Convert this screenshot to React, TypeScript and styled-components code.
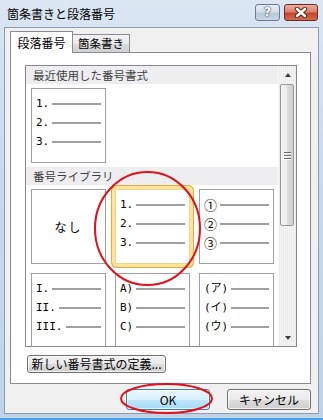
import styled, { createGlobalStyle } from 'styled-components';

const GlobalStyle = createGlobalStyle`
  html, body {
    margin: 0;
    padding: 0;
  }
  body {
    font-family: "Noto Sans CJK JP", sans-serif;
    background: #c9d9ec;
  }
`;

const recent = ['1.', '2.', '3.'];

const library = [
  { kind: 'none' },
  { kind: 'list', items: ['1.', '2.', '3.'], selected: true },
  { kind: 'list', items: ['①', '②', '③'], big: true },
  { kind: 'list', items: ['I.', 'II.', 'III.'] },
  { kind: 'list', items: ['A)', 'B)', 'C)'] },
  { kind: 'list', items: ['(ア)', '(イ)', '(ウ)'] },
];

const NumberCell = ({
  items,
  selected,
  big,
}: {
  items: string[];
  selected?: boolean;
  big?: boolean;
}) => (
  <Cell $selected={selected}>
    {items.map((item) => (
      <Entry key={item}>
        <Num $big={big}>{item}</Num>
        <Rule />
      </Entry>
    ))}
  </Cell>
);

const App = () => {
  return (
    <>
      <GlobalStyle />
      <Window>
        <TitleBar>
          <TitleText>箇条書きと段落番号</TitleText>
          <Captions>
            <HelpButton>?</HelpButton>
            <CloseButton>
              <svg width="14" height="11" viewBox="0 0 14 11">
                <path d="M3 2 L11 9 M11 2 L3 9" stroke="#5a2218" strokeWidth="4.4" strokeLinecap="round" />
                <path d="M3 2 L11 9 M11 2 L3 9" stroke="#ffffff" strokeWidth="2.6" strokeLinecap="round" />
              </svg>
            </CloseButton>
          </Captions>
        </TitleBar>
        <Client>
          <TabStrip>
            <TabActive>段落番号</TabActive>
            <TabInactive>箇条書き</TabInactive>
          </TabStrip>
          <Panel>
            <ListBox>
              <ListContent>
                <GroupHeader>最近使用した番号書式</GroupHeader>
                <CellGrid>
                  <NumberCell items={recent} />
                </CellGrid>
                <GroupHeader>番号ライブラリ</GroupHeader>
                <CellGrid>
                  {library.map((entry, idx) =>
                    entry.kind === 'none' ? (
                      <NoneCell key={idx}>なし</NoneCell>
                    ) : (
                      <NumberCell
                        key={idx}
                        items={entry.items as string[]}
                        selected={entry.selected}
                        big={entry.big}
                      />
                    ),
                  )}
                </CellGrid>
              </ListContent>
              <ScrollBar>
                <ArrowBox>
                  <ArrowUp />
                </ArrowBox>
                <Thumb>
                  <Grip />
                  <Grip />
                  <Grip />
                </Thumb>
                <Track />
                <ArrowBox>
                  <ArrowDown />
                </ArrowBox>
              </ScrollBar>
            </ListBox>
            <DefineButton>新しい番号書式の定義...</DefineButton>
          </Panel>
          <ButtonRow>
            <DialogButton $primary>OK</DialogButton>
            <DialogButton>キャンセル</DialogButton>
          </ButtonRow>
        </Client>
        <Marks width="323" height="420" viewBox="0 0 323 420">
          <ellipse cx="147.5" cy="228.5" rx="52.5" ry="56.5" fill="none" stroke="#e3101a" strokeWidth="2" />
          <ellipse cx="166.5" cy="398.5" rx="45.5" ry="14.5" fill="none" stroke="#e3101a" strokeWidth="2" />
        </Marks>
      </Window>
    </>
  );
};

export default App;

const Window = styled.div`
  position: relative;
  box-sizing: border-box;
  width: 323px;
  height: 420px;
  display: flex;
  flex-direction: column;
  padding: 0 4px 4px 4px;
  background: linear-gradient(180deg, #dbe6f3 0%, #cad9ec 40%, #bfd2e8 100%);
  border-bottom: 2px solid #4aa3ea;
`;

const TitleBar = styled.div`
  height: 27px;
  display: flex;
  align-items: flex-start;
  padding-left: 3px;
`;

const TitleText = styled.div`
  margin-top: 6px;
  font-size: 12px;
  line-height: 16px;
  color: #000;
`;

const Captions = styled.div`
  margin-left: auto;
  margin-top: 4px;
  margin-right: 1px;
  display: flex;
  gap: 4px;
`;

const HelpButton = styled.div`
  box-sizing: border-box;
  width: 25px;
  height: 17px;
  border: 1px solid #6b7c92;
  border-radius: 3px;
  background: linear-gradient(180deg, #e6edf5 0%, #d2dde9 48%, #b7c7d9 52%, #c8d6e5 100%);
  color: #fff;
  font-family: "DejaVu Sans", sans-serif;
  font-weight: bold;
  font-size: 12px;
  line-height: 15px;
  text-align: center;
  text-shadow: 0 0 2px #2b3b50, 0 0 1px #2b3b50;
`;

const CloseButton = styled.div`
  box-sizing: border-box;
  width: 34px;
  height: 17px;
  border: 1px solid #6e2a1d;
  border-radius: 3px;
  background: linear-gradient(180deg, #e8ad9e 0%, #d9806b 48%, #c3442c 52%, #d46a4c 100%);
  display: flex;
  align-items: center;
  justify-content: center;
`;

const Client = styled.div`
  flex: 1;
  display: flex;
  flex-direction: column;
  background: #f0f0f0;
  border: 1px solid #8b9cb3;
  padding: 3px 7px 0 5px;
`;

const TabStrip = styled.div`
  position: relative;
  z-index: 1;
  display: flex;
  align-items: flex-end;
  height: 22px;
  margin-bottom: -1px;
`;

const TabActive = styled.div`
  box-sizing: border-box;
  width: 63px;
  height: 22px;
  border: 1px solid #898c95;
  border-bottom: none;
  background: #fff;
  font-size: 12px;
  line-height: 21px;
  text-align: center;
  color: #000;
`;

const TabInactive = styled.div`
  box-sizing: border-box;
  width: 58px;
  height: 18px;
  margin-left: -1px;
  margin-bottom: 1px;
  border: 1px solid #898c95;
  border-bottom: none;
  background: linear-gradient(180deg, #f3f3f3 0%, #ebebeb 50%, #dddddd 51%, #cfcfcf 100%);
  font-size: 11.5px;
  line-height: 17px;
  text-align: center;
  color: #000;
`;

const Panel = styled.div`
  box-sizing: border-box;
  height: 332px;
  background: #fff;
  border: 1px solid #898c95;
  padding: 12px 13px 0 14px;
`;

const ListBox = styled.div`
  box-sizing: border-box;
  height: 282px;
  display: flex;
  border: 1px solid #828790;
  background: #fff;
`;

const ListContent = styled.div`
  flex: 1;
  display: flex;
  flex-direction: column;
  overflow: hidden;
`;

const GroupHeader = styled.div`
  flex: none;
  height: 18px;
  padding-left: 7px;
  background: #eeeef1;
  color: #3e3e3e;
  font-size: 11.5px;
  line-height: 18px;
`;

const CellGrid = styled.div`
  flex: none;
  display: grid;
  grid-template-columns: repeat(3, 75px);
  grid-auto-rows: 75px;
  gap: 9px;
  padding: 4px 0 4px 5px;
`;

const Cell = styled.div<{ $selected?: boolean }>`
  box-sizing: border-box;
  padding: 5px 4px 0 4px;
  background: #fff;
  border: 1px solid ${(p) => (p.$selected ? '#f4d485' : '#a0a0a0')};
  border-radius: ${(p) => (p.$selected ? '2px' : '0')};
  box-shadow: ${(p) => (p.$selected ? '0 0 0 3px #fde49c, 0 0 0 4px #e2ad45' : 'none')};
`;

const NoneCell = styled.div`
  box-sizing: border-box;
  border: 1px solid #a0a0a0;
  display: flex;
  align-items: center;
  justify-content: center;
  font-size: 12px;
  letter-spacing: 2px;
  color: #000;
`;

const Entry = styled.div`
  display: flex;
  align-items: center;
  height: 19px;
`;

const Num = styled.span<{ $big?: boolean }>`
  font-family: ${(p) =>
    p.$big ? '"Noto Sans CJK JP", sans-serif' : '"DejaVu Sans Mono", "Noto Sans CJK JP", monospace'};
  font-size: ${(p) => (p.$big ? '13px' : '11px')};
  line-height: 19px;
  color: #000;
  white-space: nowrap;
`;

const Rule = styled.div`
  flex: 1;
  height: 2px;
  margin-left: 3px;
  background: #a0a0a0;
`;

const ScrollBar = styled.div`
  flex: none;
  width: 17px;
  display: flex;
  flex-direction: column;
  background: repeating-linear-gradient(90deg, #ebebeb 0px, #ebebeb 1px, #f4f4f4 1px, #f4f4f4 2px);
  border-left: 1px solid #f7f7f7;
`;

const ArrowBox = styled.div`
  flex: none;
  height: 17px;
  display: flex;
  align-items: center;
  justify-content: center;
`;

const ArrowUp = styled.div`
  width: 0;
  height: 0;
  border-left: 3.5px solid transparent;
  border-right: 3.5px solid transparent;
  border-bottom: 4px solid #3d3d3d;
`;

const ArrowDown = styled.div`
  width: 0;
  height: 0;
  border-left: 3.5px solid transparent;
  border-right: 3.5px solid transparent;
  border-top: 4px solid #3d3d3d;
`;

const Thumb = styled.div`
  flex: none;
  box-sizing: border-box;
  height: 142px;
  width: 14px;
  margin: 1px 0 0 1px;
  border: 1px solid #979797;
  border-radius: 2px;
  background: linear-gradient(90deg, #f4f4f4 0%, #ececec 45%, #dcdcdc 55%, #cfcfcf 100%);
  display: flex;
  flex-direction: column;
  align-items: center;
  justify-content: center;
  gap: 2px;
`;

const Grip = styled.div`
  width: 7px;
  height: 1px;
  background: #6b6b6b;
  box-shadow: 0 1px 0 #fafafa;
`;

const Track = styled.div`
  flex: 1;
`;

const DefineButton = styled.div`
  box-sizing: border-box;
  width: 139px;
  height: 18px;
  margin: 8px 0 0 2px;
  border: 1px solid #707070;
  border-radius: 3px;
  background: linear-gradient(180deg, #f2f2f2 0%, #ebebeb 50%, #dddddd 51%, #cfcfcf 100%);
  box-shadow: inset 0 0 0 1px rgba(255, 255, 255, 0.7);
  font-size: 12px;
  line-height: 16px;
  text-align: center;
  color: #000;
`;

const ButtonRow = styled.div`
  display: flex;
  justify-content: flex-end;
  gap: 17px;
  margin-top: 5px;
`;

const DialogButton = styled.div<{ $primary?: boolean }>`
  box-sizing: border-box;
  width: 84px;
  height: 21px;
  border: 1px solid ${(p) => (p.$primary ? '#3c7fb1' : '#707070')};
  border-radius: 3px;
  background: ${(p) =>
    p.$primary
      ? 'linear-gradient(180deg, #eaf6fd 0%, #d9f0fc 50%, #bee6fd 51%, #a7d9f5 100%)'
      : 'linear-gradient(180deg, #f2f2f2 0%, #ebebeb 50%, #dddddd 51%, #cfcfcf 100%)'};
  box-shadow: inset 0 0 0 1px rgba(255, 255, 255, 0.7);
  font-size: 12px;
  line-height: 19px;
  text-align: center;
  color: #000;
`;

const Marks = styled.svg`
  position: absolute;
  top: 0;
  left: 0;
  pointer-events: none;
`;
